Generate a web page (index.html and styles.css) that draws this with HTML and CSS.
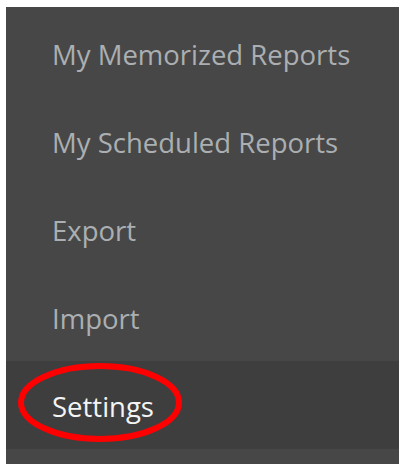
FILE: index.html
```html
<!DOCTYPE html>
<html lang="en">
<head>
<meta charset="utf-8">
<title>Menu</title>
<link rel="stylesheet" href="styles.css">
</head>
<body>
<nav class="menu">
  <ul class="menu-list">
    <li class="menu-item">My Memorized Reports</li>
    <li class="menu-item">My Scheduled Reports</li>
    <li class="menu-item">Export</li>
    <li class="menu-item">Import</li>
    <li class="menu-item menu-item--active">Settings
      <svg class="callout" width="164" height="79" viewBox="0 0 164 79" aria-hidden="true">
        <ellipse cx="82" cy="39.5" rx="79" ry="36.5" fill="none" stroke="#ff0000" stroke-width="6"/>
      </svg>
    </li>
  </ul>
</nav>
</body>
</html>
```
FILE: styles.css
```css
html, body {
  margin: 0;
  padding: 0;
  background: #ffffff;
}
body {
  padding: 7px 8px 6px 6px;
  font-family: "Open Sans", "Liberation Sans", sans-serif;
}
.menu {
  width: 393px;
  height: 457px;
  background: #474747;
  padding-top: 2px;
  box-sizing: border-box;
}
.menu-list {
  list-style: none;
  margin: 0;
  padding: 0;
}
.menu-item {
  position: relative;
  height: 88px;
  box-sizing: border-box;
  padding: 4px 0 0 46px;
  line-height: 84px;
  font-size: 27.5px;
  letter-spacing: 0;
  color: #abafb2;
  white-space: nowrap;
}
.menu-item--active {
  background: #3e3e3e;
  color: #f4f4f4;
}
.callout {
  position: absolute;
  left: 12px;
  top: 2px;
  display: block;
}
```
